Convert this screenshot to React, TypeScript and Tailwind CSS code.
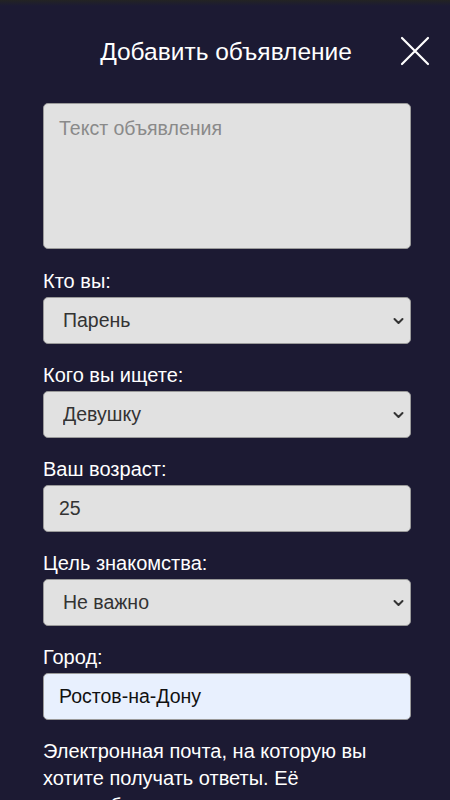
import { useState } from "react";

const ChevronDown = () => (
  <svg
    className="pointer-events-none absolute right-[7px] top-1/2 -translate-y-1/2"
    width="11"
    height="7"
    viewBox="0 0 11 7"
    fill="none"
  >
    <path d="M1.5 1.5l4 4 4-4" stroke="#333" strokeWidth="2" strokeLinecap="round" strokeLinejoin="round" />
  </svg>
);

const fieldClass =
  "w-full h-[47px] rounded-[5px] border border-[#9a9a9a] bg-[#e1e1e1] text-[19.5px] text-[#333] outline-none";

const labelClass = "block text-[20px] leading-[23px] mb-[4px] text-white";

type SelectProps = {
  label: string;
  value: string;
  options: string[];
  onChange: (v: string) => void;
};

const SelectField = ({ label, value, options, onChange }: SelectProps) => (
  <div className="mt-[20px]">
    <label className={labelClass}>{label}</label>
    <div className="relative">
      <select
        value={value}
        onChange={(e) => onChange(e.target.value)}
        className={`${fieldClass} appearance-none pl-[19px] pr-8`}
      >
        {options.map((o) => (
          <option key={o} value={o}>
            {o}
          </option>
        ))}
      </select>
      <ChevronDown />
    </div>
  </div>
);

const App = () => {
  const [who, setWho] = useState("Парень");
  const [seek, setSeek] = useState("Девушку");
  const [age, setAge] = useState("25");
  const [goal, setGoal] = useState("Не важно");
  const [city, setCity] = useState("Ростов-на-Дону");

  return (
    <div
      className="min-h-[800px] bg-[#1c1a33] text-white"
      style={{ fontFamily: '"Liberation Sans", Arial, sans-serif' }}
    >
      <div className="h-[6px] bg-gradient-to-b from-[#232323] to-[#1c1a33]" />
      <div className="relative h-[97px] flex items-start justify-center pl-[2px]">
        <h1 className="mt-[32px] text-[24.5px] leading-[28px] font-normal">Добавить объявление</h1>
        <button className="absolute right-[20px] top-[30px] w-[30px] h-[30px] flex items-center justify-center">
          <svg width="30" height="30" viewBox="0 0 30 30" fill="none">
            <path d="M2 2L28 28M28 2L2 28" stroke="white" strokeWidth="2.2" strokeLinecap="round" />
          </svg>
        </button>
      </div>

      <div className="pl-[43px] pr-[39px] pb-10">
        <textarea
          placeholder="Текст объявления"
          className="block w-full h-[146px] resize-none rounded-[5px] border border-[#9a9a9a] bg-[#e1e1e1] px-[15px] py-[13px] text-[19.5px] leading-[23px] text-[#333] placeholder:text-[#8a8a8a] outline-none"
        />

        <div className="h-px" />
        <SelectField label="Кто вы:" value={who} options={["Парень", "Девушка"]} onChange={setWho} />
        <SelectField
          label="Кого вы ищете:"
          value={seek}
          options={["Девушку", "Парня", "Не важно"]}
          onChange={setSeek}
        />

        <div className="mt-[20px]">
          <label className={labelClass}>Ваш возраст:</label>
          <input
            type="text"
            value={age}
            onChange={(e) => setAge(e.target.value)}
            className={`${fieldClass} px-[15px]`}
          />
        </div>

        <SelectField
          label="Цель знакомства:"
          value={goal}
          options={["Не важно", "Дружба", "Отношения"]}
          onChange={setGoal}
        />

        <div className="mt-[20px]">
          <label className={labelClass}>Город:</label>
          <input
            type="text"
            value={city}
            onChange={(e) => setCity(e.target.value)}
            className="w-full h-[47px] rounded-[5px] border border-[#9a9a9a] bg-[#e8f0fe] px-[15px] text-[19.5px] text-[#111] outline-none"
          />
        </div>

        <p className="mt-[18px] text-[20px] leading-[27px] text-white">
          Электронная почта, на которую вы хотите получать ответы. Её понадобится подтвердить.
        </p>
      </div>
    </div>
  );
};

export default App;
